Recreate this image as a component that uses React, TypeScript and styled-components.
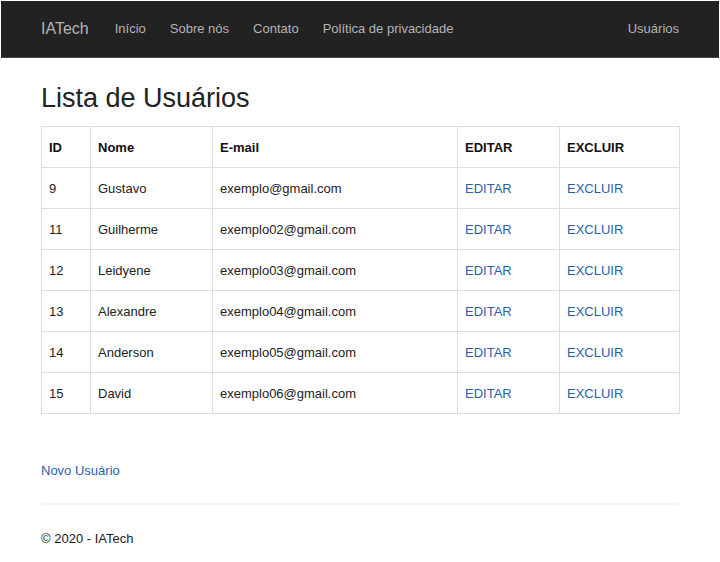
import React from "react";
import styled, { createGlobalStyle } from "styled-components";

const GlobalStyle = createGlobalStyle`
  *, *::before, *::after { box-sizing: border-box; }
  body {
    margin: 0;
    background: #fff;
    color: #222;
    font: 13px/24px "Liberation Sans", Arial, sans-serif;
  }
  a { text-decoration: none; }
`;

const Navbar = styled.nav`
  display: flex;
  align-items: center;
  gap: 26px;
  min-height: 57px;
  margin: 1px 1px 0;
  padding: 0 40px;
  background: #222;
  border-bottom: 1px solid #4a4648;
`;

const Brand = styled.a`
  color: #b4b4b4;
  font-size: 16px;
`;

const NavList = styled.ul`
  display: flex;
  flex: 1;
  gap: 24px;
  margin: 0;
  padding: 0;
  list-style: none;
`;

const NavItem = styled.li<{ $end?: boolean }>`
  margin-left: ${({ $end }) => ($end ? "auto" : "0")};
`;

const NavLink = styled.a`
  color: #b4b4b4;
`;

const Container = styled.div`
  padding: 0 41px;
`;

const Title = styled.h2`
  margin: 20px 0 8px;
  font-size: 27px;
  line-height: 40px;
  font-weight: 400;
`;

const Table = styled.table`
  width: 100%;
  table-layout: fixed;
  border-collapse: collapse;
`;

const Column = styled.col<{ $width: number }>`
  width: ${({ $width }) => $width}px;
`;

const HeadCell = styled.th`
  padding: 9px 7px 7px;
  border: 1px solid #ddd;
  color: #111;
  text-align: left;
`;

const Cell = styled.td`
  padding: 9px 7px 7px;
  border: 1px solid #ddd;
`;

const Link = styled.a`
  color: #2a5fa8;
`;

const Actions = styled.p`
  margin: 45px 0 20px;
`;

const Footer = styled.footer`
  padding: 22px 0 12px;
  border-top: 2px solid #f6f6f6;
`;

const columns = [
  { label: "ID", width: 49 },
  { label: "Nome", width: 122 },
  { label: "E-mail", width: 245 },
  { label: "EDITAR", width: 102 },
  { label: "EXCLUIR", width: 120 },
];

const users = [
  { id: 9, name: "Gustavo", email: "exemplo@gmail.com" },
  { id: 11, name: "Guilherme", email: "exemplo02@gmail.com" },
  { id: 12, name: "Leidyene", email: "exemplo03@gmail.com" },
  { id: 13, name: "Alexandre", email: "exemplo04@gmail.com" },
  { id: 14, name: "Anderson", email: "exemplo05@gmail.com" },
  { id: 15, name: "David", email: "exemplo06@gmail.com" },
];

const pages = ["Início", "Sobre nós", "Contato", "Política de privacidade"];

export default function App() {
  return (
    <>
      <GlobalStyle />
      <Navbar>
        <Brand href="#">IATech</Brand>
        <NavList>
          {pages.map((page) => (
            <NavItem key={page}>
              <NavLink href="#">{page}</NavLink>
            </NavItem>
          ))}
          <NavItem $end>
            <NavLink href="#">Usuários</NavLink>
          </NavItem>
        </NavList>
      </Navbar>
      <Container>
        <main>
          <Title>Lista de Usuários</Title>
          <Table>
            <colgroup>
              {columns.map((column) => (
                <Column key={column.label} $width={column.width} />
              ))}
            </colgroup>
            <thead>
              <tr>
                {columns.map((column) => (
                  <HeadCell key={column.label} scope="col">
                    {column.label}
                  </HeadCell>
                ))}
              </tr>
            </thead>
            <tbody>
              {users.map((user) => (
                <tr key={user.id}>
                  <Cell>{user.id}</Cell>
                  <Cell>{user.name}</Cell>
                  <Cell>{user.email}</Cell>
                  <Cell>
                    <Link href="#">EDITAR</Link>
                  </Cell>
                  <Cell>
                    <Link href="#">EXCLUIR</Link>
                  </Cell>
                </tr>
              ))}
            </tbody>
          </Table>
          <Actions>
            <Link href="#">Novo Usuário</Link>
          </Actions>
        </main>
        <Footer>© 2020 - IATech</Footer>
      </Container>
    </>
  );
}
